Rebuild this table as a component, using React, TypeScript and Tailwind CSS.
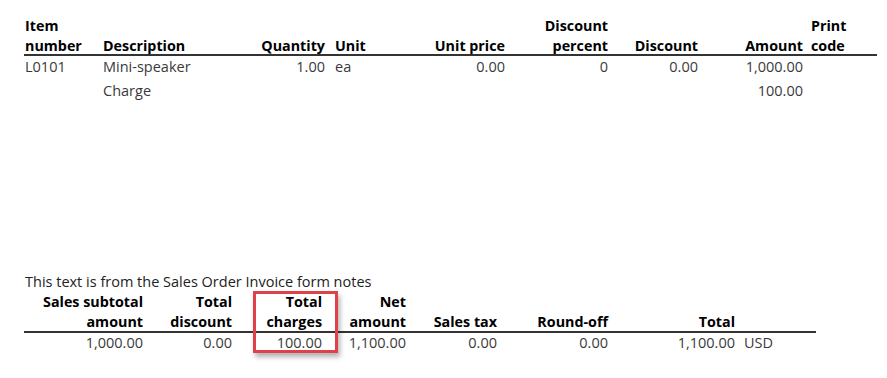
import React from "react";

const font = { fontFamily: '"Open Sans", "Noto Sans", Arial, sans-serif' };

const topHead: { l1?: string; l2: string }[] = [
  { l1: "Item", l2: "number" },
  { l2: "Description" },
  { l2: "Quantity" },
  { l2: "Unit" },
  { l2: "Unit price" },
  { l1: "Discount", l2: "percent" },
  { l2: "Discount" },
  { l2: "Amount" },
  { l1: "Print", l2: "code" },
];

const topRows: string[][] = [
  ["L0101", "Mini-speaker", "1.00", "ea", "0.00", "0", "0.00", "1,000.00", ""],
  ["", "Charge", "", "", "", "", "", "100.00", ""],
];

const topPad = [
  "pl-[1px] text-left",
  "pl-[4px] text-left",
  "pr-[4px] text-right",
  "pl-[6px] text-left",
  "pr-[4px] text-right",
  "pr-[4px] text-right",
  "pr-[4px] text-right",
  "pr-[4px] text-right",
  "pl-[4px] text-left",
];

const botHead: { l1?: string; l2: string }[] = [
  { l1: "Sales subtotal", l2: "amount" },
  { l1: "Total", l2: "discount" },
  { l1: "Total", l2: "charges" },
  { l1: "Net", l2: "amount" },
  { l2: "Sales tax" },
  { l2: "Round-off" },
  { l2: "Total" },
  { l2: "" },
];

const botRow = ["1,000.00", "0.00", "100.00", "1,100.00", "0.00", "0.00", "1,100.00", "USD"];

const botPad = [
  "pr-[4px] text-right",
  "pr-[4px] text-right",
  "pr-[4px] text-right",
  "pr-[4px] text-right",
  "pr-[4px] text-right",
  "pr-[4px] text-right",
  "pr-[4px] text-right",
  "pl-[5px] text-left",
];

export default function App() {
  return (
    <div
      className="w-[887px] h-[378px] bg-white overflow-hidden text-[14.5px] flex flex-col"
      style={font}
    >
      {/* Lines table */}
      <div className="ml-[24px] w-[853px] pt-[15.5px]">
        <div className="grid grid-cols-[75px_141px_89px_91px_89px_103px_90px_105px_70px] h-[38.5px] font-bold text-black text-[14.3px] leading-[20.5px]">
          {topHead.map((h, i) => (
            <div key={i} className={`${topPad[i]} whitespace-nowrap`}>
              <div>{h.l1 ?? "\u00a0"}</div>
              <div>{h.l2}</div>
            </div>
          ))}
        </div>
        <div className="h-[2px] bg-[#333333]" />
        <div className="mt-[-1.5px] text-[#3a3a3a] leading-[24px]">
          {topRows.map((r, ri) => (
            <div
              key={ri}
              className="grid grid-cols-[75px_141px_89px_91px_89px_103px_90px_105px_70px]"
            >
              {r.map((c, ci) => (
                <div key={ci} className={`${topPad[ci]} whitespace-nowrap`}>
                  {c || "\u00a0"}
                </div>
              ))}
            </div>
          ))}
        </div>
      </div>

      {/* Totals */}
      <div className="ml-[24px] mt-[168px] w-[792px]">
        <div className="pl-[1px] leading-[21px] text-[#222222] whitespace-nowrap">
          This text is from the Sales Order Invoice form notes
        </div>
        <div className="relative mt-[0.5px]">
          <div className="grid grid-cols-[123px_89px_90px_84px_91px_111px_127px_77px] h-[38.5px] font-bold text-black text-[14.3px] leading-[20px]">
            {botHead.map((h, i) => (
              <div key={i} className={`${botPad[i]} whitespace-nowrap`}>
                <div>{h.l1 ?? "\u00a0"}</div>
                <div>{h.l2 || "\u00a0"}</div>
              </div>
            ))}
          </div>
          <div className="h-[2px] bg-[#333333]" />
          <div className="mt-[-1.5px] grid grid-cols-[123px_89px_90px_84px_91px_111px_127px_77px] leading-[24px] text-[#3a3a3a]">
            {botRow.map((c, i) => (
              <div key={i} className={`${botPad[i]} whitespace-nowrap`}>
                {c}
              </div>
            ))}
          </div>
          <div className="absolute left-[229px] top-[-1px] w-[85px] h-[62px] border-[3px] border-[#e0404a] shadow-[2px_4px_5px_rgba(0,0,0,0.3)]" />
        </div>
      </div>
    </div>
  );
}
